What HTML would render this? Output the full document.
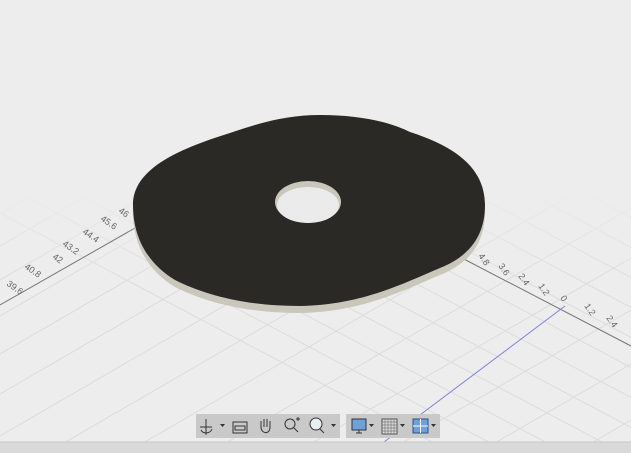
<!DOCTYPE html>
<html><head><style>
html,body{margin:0;padding:0;width:631px;height:453px;overflow:hidden;background:#ededed;font-family:"Liberation Sans",sans-serif}
svg{display:block}
</style></head><body>
<svg width="631" height="453" viewBox="0 0 631 453" xmlns="http://www.w3.org/2000/svg" style="position:absolute;left:0;top:0">
<defs>
<linearGradient id="fade" x1="0" y1="0" x2="0" y2="1">
<stop offset="0" stop-color="#fff" stop-opacity="0"/>
<stop offset="0.35" stop-color="#fff" stop-opacity="1"/>
</linearGradient>
<mask id="m"><rect x="0" y="190" width="631" height="263" fill="url(#fade)"/></mask>
<path id="disc" d="M133,205 C133,170 175,150 230,133 C265,121 290,115 320,115 C360,115 390,122 410,132 C450,145 485,165 485,205 C485,240 465,258 440,268 C400,285 360,305 300,306 C245,306 205,295 175,280 C150,265 133,240 133,205 Z"/>
</defs>
<rect width="631" height="453" fill="#ededed"/>
<g mask="url(#m)" stroke="#dcdcdc" stroke-width="1">
<line x1="-200" y1="300" x2="700" y2="-222"/><line x1="-200" y1="330" x2="700" y2="-192"/><line x1="-200" y1="362" x2="700" y2="-160"/><line x1="-200" y1="396" x2="700" y2="-126"/><line x1="-200" y1="432" x2="700" y2="-90"/><line x1="-200" y1="470" x2="700" y2="-52"/><line x1="-200" y1="510" x2="700" y2="-12"/><line x1="-200" y1="552" x2="700" y2="30"/><line x1="-200" y1="596" x2="700" y2="74"/><line x1="-200" y1="642" x2="700" y2="120"/><line x1="-200" y1="690" x2="700" y2="168"/><line x1="-200" y1="740" x2="700" y2="218"/><line x1="-200" y1="792" x2="700" y2="270"/><line x1="-200" y1="846" x2="700" y2="324"/><line x1="-200" y1="902" x2="700" y2="380"/><line x1="-200" y1="960" x2="700" y2="438"/><line x1="-200" y1="1020" x2="700" y2="498"/>
<line x1="-100" y1="100" x2="700" y2="524"/><line x1="-100" y1="130" x2="700" y2="554"/><line x1="-100" y1="160" x2="700" y2="584"/><line x1="-100" y1="70" x2="700" y2="494"/><line x1="-100" y1="40" x2="700" y2="464"/><line x1="-100" y1="10" x2="700" y2="434"/><line x1="-100" y1="-20" x2="700" y2="404"/><line x1="-100" y1="-50" x2="700" y2="374"/><line x1="-100" y1="-80" x2="700" y2="344"/><line x1="-100" y1="-110" x2="700" y2="314"/><line x1="-100" y1="-140" x2="700" y2="284"/><line x1="-100" y1="-170" x2="700" y2="254"/><line x1="-100" y1="-200" x2="700" y2="224"/><line x1="-100" y1="-230" x2="700" y2="194"/><line x1="-100" y1="-260" x2="700" y2="164"/><line x1="-100" y1="-290" x2="700" y2="134"/><line x1="-100" y1="-320" x2="700" y2="104"/><line x1="-100" y1="-350" x2="700" y2="74"/><line x1="-100" y1="-380" x2="700" y2="44"/><line x1="-100" y1="-410" x2="700" y2="14"/><line x1="-100" y1="-440" x2="700" y2="-16"/>
</g>
<line x1="0" y1="305" x2="135" y2="228" stroke="#777" stroke-width="1"/>
<line x1="460" y1="257" x2="631" y2="346" stroke="#777" stroke-width="1"/>
<line x1="384" y1="442" x2="565" y2="306" stroke="#8080e0" stroke-width="1"/>
<g font-size="9" fill="#666">
<text transform="translate(6,285) rotate(35)">39.6</text>
<text transform="translate(24,268) rotate(35)">40.8</text>
<text transform="translate(52,258) rotate(35)">42</text>
<text transform="translate(62,245) rotate(35)">43.2</text>
<text transform="translate(82,233) rotate(35)">44.4</text>
<text transform="translate(100,220) rotate(35)">45.6</text>
<text transform="translate(118,212) rotate(35)">46</text>
<text transform="translate(478,256) rotate(55)">4.8</text>
<text transform="translate(498,266) rotate(55)">3.6</text>
<text transform="translate(518,276) rotate(55)">2.4</text>
<text transform="translate(538,286) rotate(55)">1.2</text>
<text transform="translate(560,298) rotate(55)">0</text>
<text transform="translate(584,306) rotate(55)">1.2</text>
<text transform="translate(606,318) rotate(55)">2.4</text>
</g>
<use href="#disc" fill="#c9c6bb" transform="translate(0,7)"/>
<use href="#disc" fill="#2b2926"/>
<ellipse cx="308" cy="202" rx="33" ry="21" fill="#c9c6bb"/>
<ellipse cx="308" cy="205" rx="31" ry="18" fill="#ebebeb"/>
<rect x="0" y="442" width="631" height="11" fill="#d9d9d9"/>
<line x1="0" y1="442" x2="631" y2="442" stroke="#c8c8c8"/>
<rect x="196" y="414" width="144" height="24" fill="#c9c9c9"/>
<rect x="346" y="414" width="94" height="24" fill="#c9c9c9"/>
<g stroke="#333" fill="none" stroke-width="1">
<path d="M206,419 v16 M200,427 h12 M201,430 c2,4 9,4 11,-1"/>
<rect x="233" y="422" width="14" height="11"/><rect x="235" y="426" width="10" height="4"/>
<path d="M261,427 v-6 M264,427 v-8 M267,427 v-8 M270,427 v-6 M261,427 c0,7 9,8 9,0"/>
<circle cx="290" cy="424" r="5"/><path d="M294,428 l4,4 M296,419 h4 M298,417 v4"/>
<circle cx="316" cy="424" r="6" fill="#e8eef4"/><path d="M320,429 l4,4"/>
</g>
<g fill="#333"><path d="M220,424 h5 l-2.5,3z M331,424 h5 l-2.5,3z M369,424 h5 l-2.5,3z M400,424 h5 l-2.5,3z M431,424 h5 l-2.5,3z"/></g>
<rect x="352" y="419" width="14" height="11" fill="#6fa0d8" stroke="#333"/><path d="M356,433 h6 M359,430 v3" stroke="#333"/>
<rect x="382" y="419" width="15" height="15" fill="#ddd" stroke="#555"/>
<path d="M385,419v15M388,419v15M391,419v15M394,419v15M382,422h15M382,425h15M382,428h15M382,431h15" stroke="#777" stroke-width="0.7"/>
<rect x="413" y="419" width="15" height="14" fill="#6fa0d8" stroke="#2a4f8a"/><path d="M420.5,419v14M413,426h15" stroke="#fff"/>
</svg>
</body></html>
